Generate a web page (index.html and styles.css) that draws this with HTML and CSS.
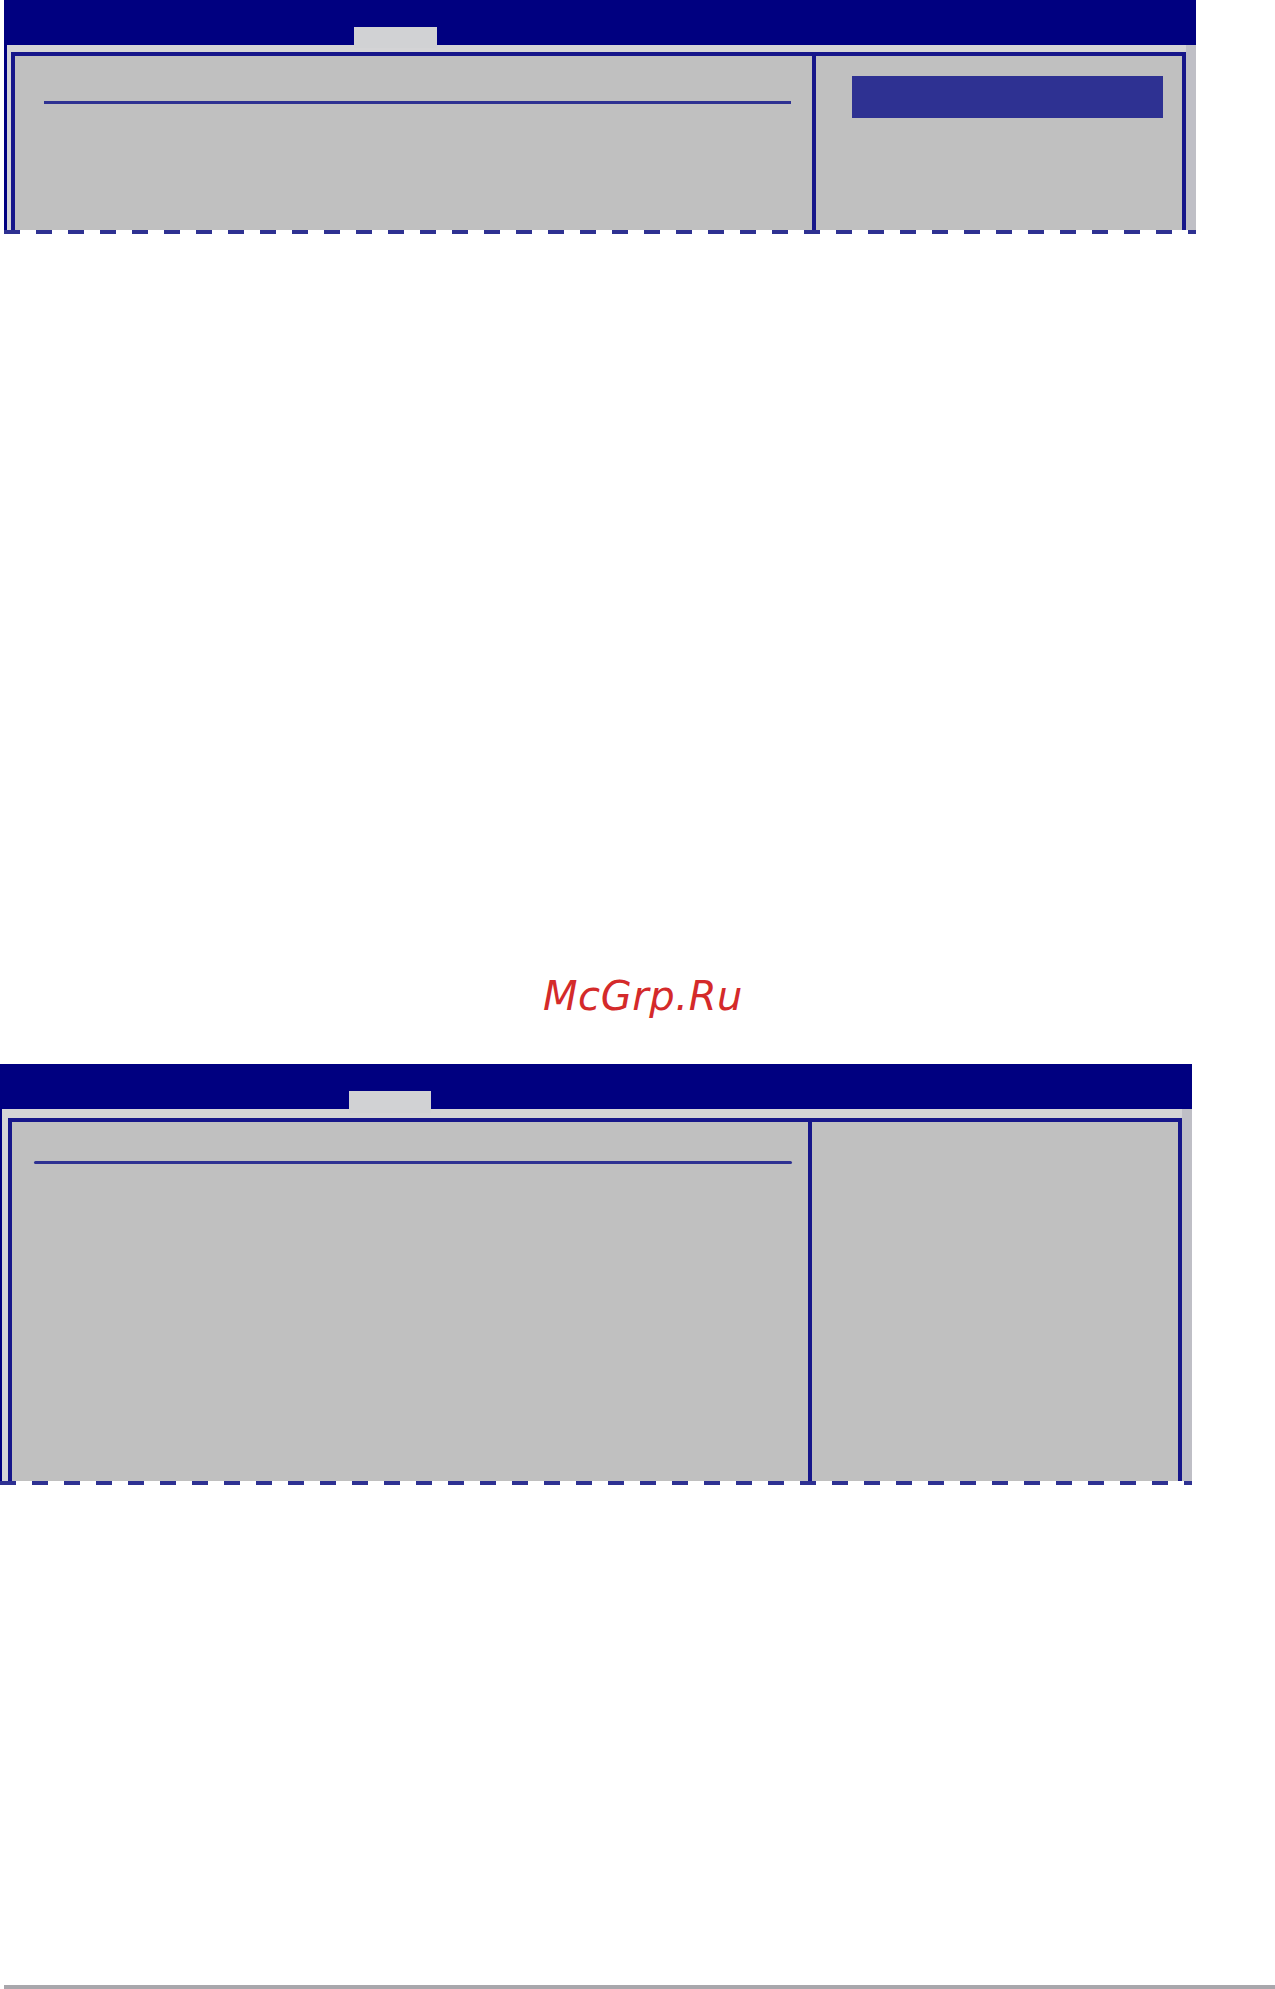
FILE: index.html
```html
<!DOCTYPE html>
<html>
<head>
<meta charset="utf-8">
<title>BIOS screens</title>
<link rel="stylesheet" href="styles.css">
</head>
<body>
<div class="panel panel-a">
  <div class="titlebar"><div class="tab"></div></div>
  <div class="pbody">
    <div class="frame">
      <div class="col-left"><div class="rule"></div></div>
      <div class="col-right"><div class="hilite"></div></div>
    </div>
  </div>
  <div class="dashes"></div>
</div>

<div class="watermark">McGrp.Ru</div>

<div class="panel panel-b">
  <div class="titlebar"><div class="tab"></div></div>
  <div class="pbody">
    <div class="frame">
      <div class="col-left"><div class="rule"></div></div>
      <div class="col-right"></div>
    </div>
  </div>
  <div class="dashes"></div>
</div>

<div class="footline"></div>
</body>
</html>
```

FILE: styles.css
```css
html, body {
  margin: 0;
  padding: 0;
  background: #ffffff;
}
body {
  width: 1275px;
  height: 1989px;
  overflow: hidden;
  font-family: "DejaVu Sans", sans-serif;
}

.panel {
  width: 1192px;
  display: flex;
  flex-direction: column;
}
.panel-a { margin-left: 4px; }
.panel-b { margin-left: 0; margin-top: 44px; }

.titlebar {
  height: 45px;
  background: #000080;
  display: flex;
  align-items: flex-end;
}
.panel-a .titlebar { padding-left: 350px; }
.panel-b .titlebar { padding-left: 349px; }

.tab {
  position: relative;
  z-index: 1;
  background: #d1d2d4;
}
.panel-a .tab { width: 83px; height: 21px; margin-bottom: -3px; }
.panel-b .tab { width: 82px; height: 22px; margin-bottom: -4px; }

.pbody {
  background: #d4d4d6;
  border-left: 3px solid #000080;
  border-right: 10px solid #bfbfc6;
  padding-left: 4px;
}
.panel-a .pbody { padding-top: 7px; }
.panel-b .pbody { padding-top: 9px; border-left-width: 2px; padding-left: 6px; }

.frame {
  background: #c0c0c0;
  border: 4px solid #16168a;
  border-bottom: none;
  display: flex;
}
.panel-a .frame { height: 174px; }
.panel-b .frame { height: 359px; }

.col-left {
  border-right: 4px solid #16168a;
}
.panel-a .col-left { width: 797px; }
.panel-b .col-left { width: 796px; }

.col-right { flex: 1; }

.rule {
  height: 3px;
  background: #2e3192;
}
.panel-a .rule { margin: 45px 21px 0 29px; }
.panel-b .rule { margin: 39px 16px 0 22px; border-radius: 2px; }

.hilite {
  margin: 20px 0 0 36px;
  width: 311px;
  height: 42px;
  background: #2e3192;
}

.dashes {
  height: 4px;
  background: repeating-linear-gradient(90deg, #2e3192 0 16px, transparent 16px 32px);
}

.watermark {
  margin-top: 738px;
  margin-left: 543px;
  height: 48px;
  line-height: 48px;
  font-size: 40px;
  font-style: italic;
  letter-spacing: 0.6px;
  color: #d42a2a;
  white-space: nowrap;
}

.footline {
  margin-top: 500px;
  margin-left: 4px;
  height: 4px;
  background: #a8a7ac;
}
```
